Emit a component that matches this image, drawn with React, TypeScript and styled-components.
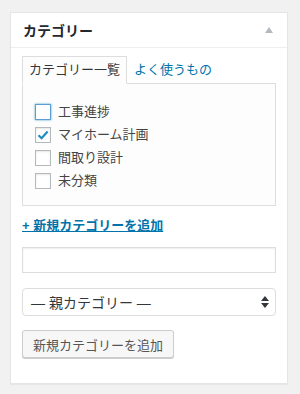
import styled, { createGlobalStyle } from "styled-components";

const GlobalStyle = createGlobalStyle`
  html, body {
    margin: 0;
    padding: 0;
    background: #f1f1f1;
    font-family: "Liberation Sans", "Noto Sans CJK JP", sans-serif;
    font-size: 13px;
    color: #444;
  }
`;

const Page = styled.div`
  padding: 12px 12px 10px 10px;
`;

const Box = styled.div`
  background: #fff;
  border: 1px solid #e5e5e5;
  box-shadow: 0 1px 1px rgba(0, 0, 0, 0.04);
`;

const Header = styled.div`
  display: flex;
  align-items: center;
  justify-content: space-between;
  height: 34px;
  padding: 0 12px;
  border-bottom: 1px solid #eee;
`;

const Title = styled.h2`
  margin: 0;
  font-size: 14px;
  font-weight: 700;
  color: #23282d;
`;

const Toggle = styled.span`
  width: 0;
  height: 0;
  border-left: 4px solid transparent;
  border-right: 4px solid transparent;
  border-bottom: 6px solid #b4b9be;
  margin-right: 2px;
`;

const Inside = styled.div`
  padding: 8px 11px 25px 11px;
`;

const Tabs = styled.ul`
  display: flex;
  margin: 0;
  padding: 0;
  list-style: none;
`;

const Tab = styled.li<{ $active?: boolean }>`
  padding: 4px 6px 5px;
  line-height: 17px;
  border: 1px solid ${(p) => (p.$active ? "#ddd" : "transparent")};
  border-bottom: ${(p) => (p.$active ? "1px solid #fdfdfd" : "none")};
  background: ${(p) => (p.$active ? "#fdfdfd" : "transparent")};
  color: ${(p) => (p.$active ? "#32373c" : "#0073aa")};
  margin-bottom: -1px;
  position: relative;
`;

const Panel = styled.div`
  border: 1px solid #ddd;
  background: #fdfdfd;
  padding: 20px 12px 16px;
`;

const List = styled.ul`
  margin: 0;
  padding: 0;
  list-style: none;
  display: flex;
  flex-direction: column;
  gap: 7px;
`;

const Item = styled.li`
  display: flex;
  align-items: center;
  gap: 7px;
  height: 16px;
  line-height: 16px;
  color: #444;
`;

const Check = styled.span<{ $focus?: boolean }>`
  width: 14px;
  height: 14px;
  border: 1px solid ${(p) => (p.$focus ? "#5b9dd9" : "#b4b9be")};
  box-shadow: ${(p) =>
    p.$focus ? "0 0 2px rgba(30,140,190,0.8)" : "inset 0 1px 2px rgba(0,0,0,0.1)"};
  background: #fff;
  display: flex;
  align-items: center;
  justify-content: center;
`;

const AddLink = styled.a`
  display: block;
  width: max-content;
  margin-top: 11px;
  line-height: 17px;
  color: #0073aa;
  font-weight: 700;
  text-decoration: underline;
`;

const TextInput = styled.div`
  margin-top: 13px;
  height: 24px;
  border: 1px solid #ddd;
  background: #fff;
  box-shadow: inset 0 1px 2px rgba(0, 0, 0, 0.07);
`;

const Select = styled.div`
  margin-top: 15px;
  height: 26px;
  border: 1px solid #ddd;
  border-radius: 4px;
  background: #fff;
  display: flex;
  align-items: center;
  justify-content: space-between;
  padding: 0 6px 0 8px;
  font-size: 14px;
  color: #32373c;
`;

const Button = styled.div`
  margin-top: 14px;
  display: flex;
  width: max-content;
  align-items: center;
  height: 26px;
  padding: 0 10px;
  border: 1px solid #ccc;
  border-radius: 3px;
  background: #f7f7f7;
  box-shadow: 0 1px 0 #ccc;
  color: #555;
`;

const items = [
  { label: "工事進捗", checked: false, focus: true },
  { label: "マイホーム計画", checked: true, focus: false },
  { label: "間取り設計", checked: false, focus: false },
  { label: "未分類", checked: false, focus: false },
];

export default function App() {
  return (
    <Page>
      <GlobalStyle />
      <Box>
        <Header>
          <Title>カテゴリー</Title>
          <Toggle />
        </Header>
        <Inside>
          <Tabs>
            <Tab $active>カテゴリー一覧</Tab>
            <Tab>よく使うもの</Tab>
          </Tabs>
          <Panel>
            <List>
              {items.map((it) => (
                <Item key={it.label}>
                  <Check $focus={it.focus}>
                    {it.checked && (
                      <svg width="12" height="12" viewBox="0 0 12 12">
                        <path d="M1.5 6.2 L4.6 9.2 L10.6 2.6" fill="none" stroke="#1e8cbe" strokeWidth="2.2" />
                      </svg>
                    )}
                  </Check>
                  {it.label}
                </Item>
              ))}
            </List>
          </Panel>
          <AddLink href="#">+ 新規カテゴリーを追加</AddLink>
          <TextInput />
          <Select>
            <span>— 親カテゴリー —</span>
            <svg width="8" height="12" viewBox="0 0 8 12">
              <path d="M4 0 L8 5 L0 5 Z M0 7 L8 7 L4 12 Z" fill="#32373c" />
            </svg>
          </Select>
          <Button>新規カテゴリーを追加</Button>
        </Inside>
      </Box>
    </Page>
  );
}
